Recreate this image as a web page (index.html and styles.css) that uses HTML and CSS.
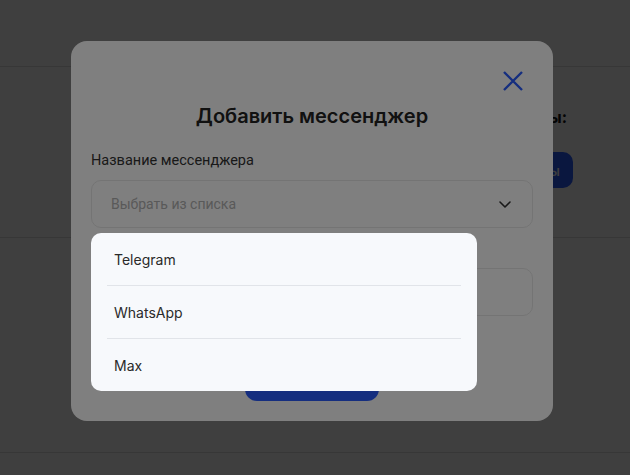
FILE: index.html
```html
<!DOCTYPE html>
<html lang="ru">
<head>
<meta charset="utf-8">
<title>Добавить мессенджер</title>
<link rel="stylesheet" href="styles.css">
</head>
<body>
<div class="page">
  <header class="topbar"></header>
  <section class="section section-top">
    <div class="side">
      <h3 class="side-title">Мессенджеры:</h3>
      <button class="side-btn">Мессенджеры</button>
    </div>
  </section>
  <section class="section section-mid"></section>
</div>

<div class="backdrop"></div>

<div class="modal">
  <button class="close" aria-label="Закрыть">
    <svg width="20" height="20" viewBox="0 0 20 20"><path d="M1 1 L19 19 M19 1 L1 19" stroke="#2a5cff" stroke-width="2.4" fill="none"/></svg>
  </button>
  <h2 class="modal-title">Добавить мессенджер</h2>

  <div class="field">
    <label class="field-label">Название мессенджера</label>
    <div class="select-wrap">
      <div class="select">
        <span class="placeholder">Выбрать из списка</span>
        <svg class="chevron" width="12" height="7" viewBox="0 0 12 7"><path d="M1 1 L6 6 L11 1" stroke="#333" stroke-width="1.6" fill="none" stroke-linecap="round" stroke-linejoin="round"/></svg>
      </div>
      <ul class="menu">
        <li class="menu-item">Telegram</li>
        <li class="menu-item">WhatsApp</li>
        <li class="menu-item">Max</li>
      </ul>
    </div>
  </div>

  <div class="field field-second">
    <span class="field-label field-label-hidden"></span>
    <div class="input"></div>
  </div>

  <button class="submit" aria-label="Добавить"></button>

  <div class="menu-backdrop"></div>
</div>
</body>
</html>
```
FILE: styles.css
```css
html, body {
  margin: 0;
  padding: 0;
}
body {
  width: 630px;
  height: 475px;
  overflow: hidden;
  background: #ffffff;
  font-family: "Inter", "Noto Sans", sans-serif;
}

/* underlying page */
.page {
  display: flex;
  flex-direction: column;
  height: 475px;
  background: #ffffff;
}
.topbar {
  height: 66px;
  border-bottom: 1px solid #dcdcdc;
}
.section {
  border-bottom: 1px solid #dcdcdc;
  box-sizing: border-box;
}
.section-top {
  height: 171px;
  padding: 40px 57px 0 0;
  display: flex;
  justify-content: flex-end;
}
.section-mid {
  height: 215px;
}
.side {
  display: flex;
  flex-direction: column;
  align-items: flex-end;
  gap: 25px;
}
.side-title {
  margin: 0 6px 0 0;
  font-size: 16px;
  line-height: 20px;
  font-weight: 700;
  color: #111;
}
.side-btn {
  height: 36px;
  padding: 0 13px;
  border: none;
  border-radius: 10px;
  background: #2a5cff;
  color: #fff;
  font-family: "Inter", sans-serif;
  font-size: 14px;
  font-weight: 500;
}

.backdrop {
  position: fixed;
  inset: 0;
  background: rgba(0, 0, 0, 0.5);
  z-index: 5;
}

/* modal */
.modal {
  position: absolute;
  top: 41px;
  left: 71px;
  width: 482px;
  height: 380px;
  box-sizing: border-box;
  padding: 20px;
  background: #ffffff;
  border-radius: 16px;
  z-index: 10;
  display: flex;
  flex-direction: column;
}
.close {
  position: absolute;
  top: 30px;
  right: 30px;
  width: 20px;
  height: 20px;
  padding: 0;
  border: none;
  background: none;
  display: flex;
}
.modal-title {
  margin: 41px 0 0;
  font-size: 20px;
  line-height: 28px;
  font-weight: 600;
  text-align: center;
  color: #222;
}
.field {
  margin-top: 21px;
  display: flex;
  flex-direction: column;
}
.field-second {
  margin-top: 11px;
}
.field-label {
  font-family: "Roboto", sans-serif;
  font-size: 14.5px;
  line-height: 20px;
  color: #333;
  margin-bottom: 9px;
}
.field-label-hidden {
  height: 20px;
}
.select-wrap {
  position: relative;
}
.select, .input {
  height: 48px;
  box-sizing: border-box;
  border: 1px solid #e8e8e8;
  border-radius: 10px;
}
.select {
  display: flex;
  align-items: center;
  justify-content: space-between;
  padding: 0 21px 0 19px;
}
.placeholder {
  font-family: "Roboto", sans-serif;
  font-size: 14px;
  color: #b2b2b2;
}
.submit {
  margin-top: 37px;
  align-self: center;
  width: 134px;
  height: 48px;
  border: none;
  border-radius: 12px;
  background: #2a5cff;
  color: #fff;
  font-family: "Inter", sans-serif;
  font-size: 16px;
  font-weight: 600;
}

.menu-backdrop {
  position: fixed;
  inset: 0;
  background: rgba(0, 0, 0, 0.5);
  z-index: 1;
}
.menu {
  position: absolute;
  top: calc(100% + 5px);
  left: 0;
  width: 386px;
  margin: 0;
  padding: 0 16px;
  box-sizing: border-box;
  list-style: none;
  background: #f7f9fc;
  border-radius: 10px;
  z-index: 2;
}
.menu-item {
  height: 52px;
  display: flex;
  align-items: center;
  padding-left: 7px;
  border-bottom: 1px solid #e1e4e9;
  font-size: 14px;
  color: #2a2a2a;
}
.menu-item:last-child {
  border-bottom: none;
}
```
